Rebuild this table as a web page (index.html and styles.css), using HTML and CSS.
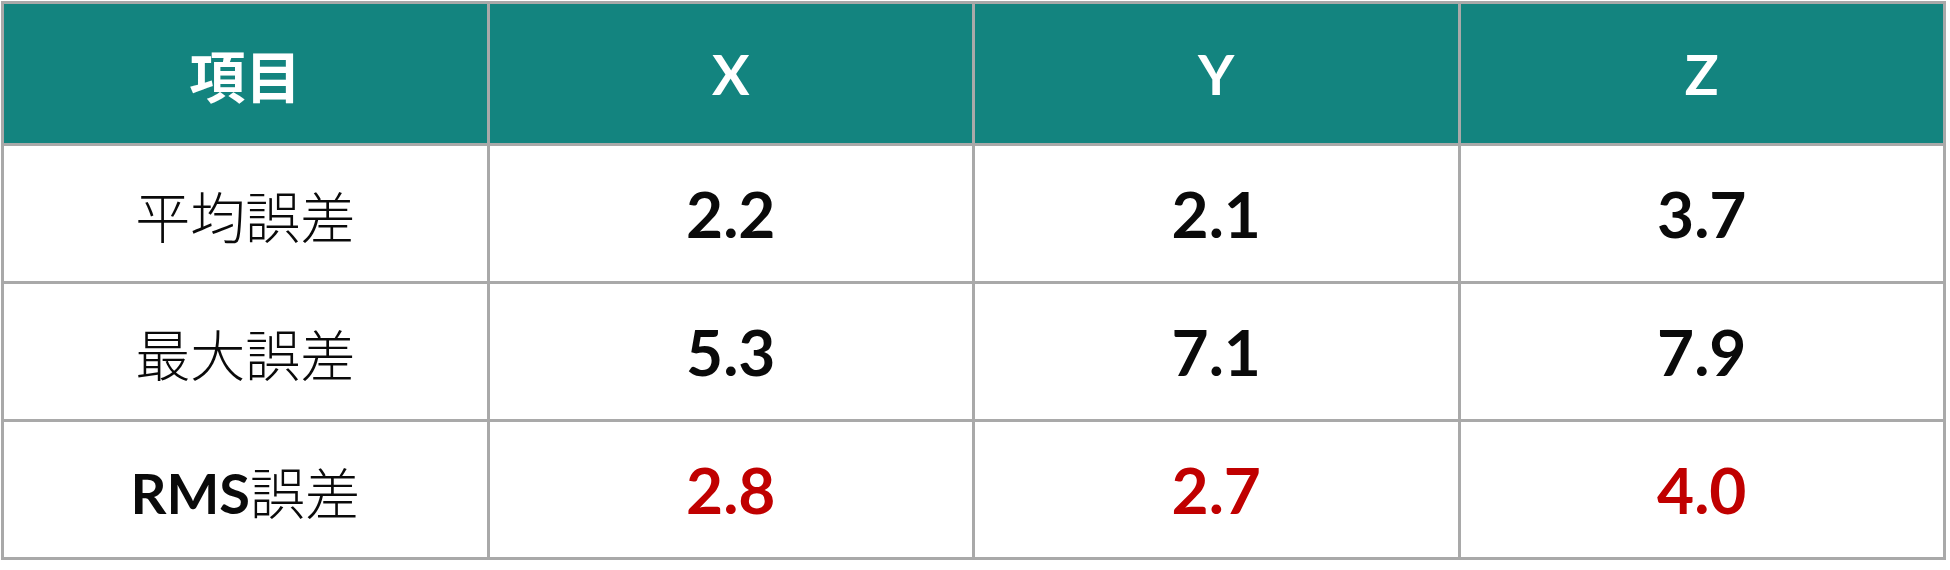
FILE: index.html
```html
<!doctype html>
<html lang="ja">
  <head>
    <meta charset="utf-8">
    <title>誤差</title>
    <link rel="stylesheet" href="styles.css">
  </head>
  <body>
    <table class="errors">
      <thead>
        <tr>
          <th>項目</th>
          <th>X</th>
          <th>Y</th>
          <th>Z</th>
        </tr>
      </thead>
      <tbody>
        <tr>
          <td class="label">平均誤差</td>
          <td>2.2</td>
          <td>2.1</td>
          <td>3.7</td>
        </tr>
        <tr>
          <td class="label">最大誤差</td>
          <td>5.3</td>
          <td>7.1</td>
          <td>7.9</td>
        </tr>
        <tr class="rms">
          <td class="label"><span class="latin">RMS</span>誤差</td>
          <td>2.8</td>
          <td>2.7</td>
          <td>4.0</td>
        </tr>
      </tbody>
    </table>
  </body>
</html>
```

FILE: styles.css
```css
html, body {
  margin: 0;
  padding: 0;
  background: #fff;
}

body {
  font-family: Lato, "Noto Sans CJK JP", sans-serif;
}

.errors {
  margin: 1px 0 0 1px;
  width: 1945px;
  table-layout: fixed;
  border-collapse: separate;
  border-spacing: 3px;
  background: #a9a9a9;
}

.errors th,
.errors td {
  padding: 0;
  text-align: center;
  vertical-align: middle;
}

.errors th {
  height: 139px;
  background: #13847f;
  color: #fff;
  font-size: 56px;
  font-weight: 700;
}

.errors td {
  height: 135px;
  background: #fff;
  color: #0a0a0a;
  font-size: 64px;
  font-weight: 700;
}

.errors td.label {
  font-family: "Noto Sans CJK JP", sans-serif;
  font-size: 55px;
  font-weight: 300;
}

.label .latin {
  font-family: Lato, sans-serif;
  font-size: 56px;
  font-weight: 700;
}

.rms td {
  color: #c00000;
}

.rms td.label {
  color: #0a0a0a;
}
```
